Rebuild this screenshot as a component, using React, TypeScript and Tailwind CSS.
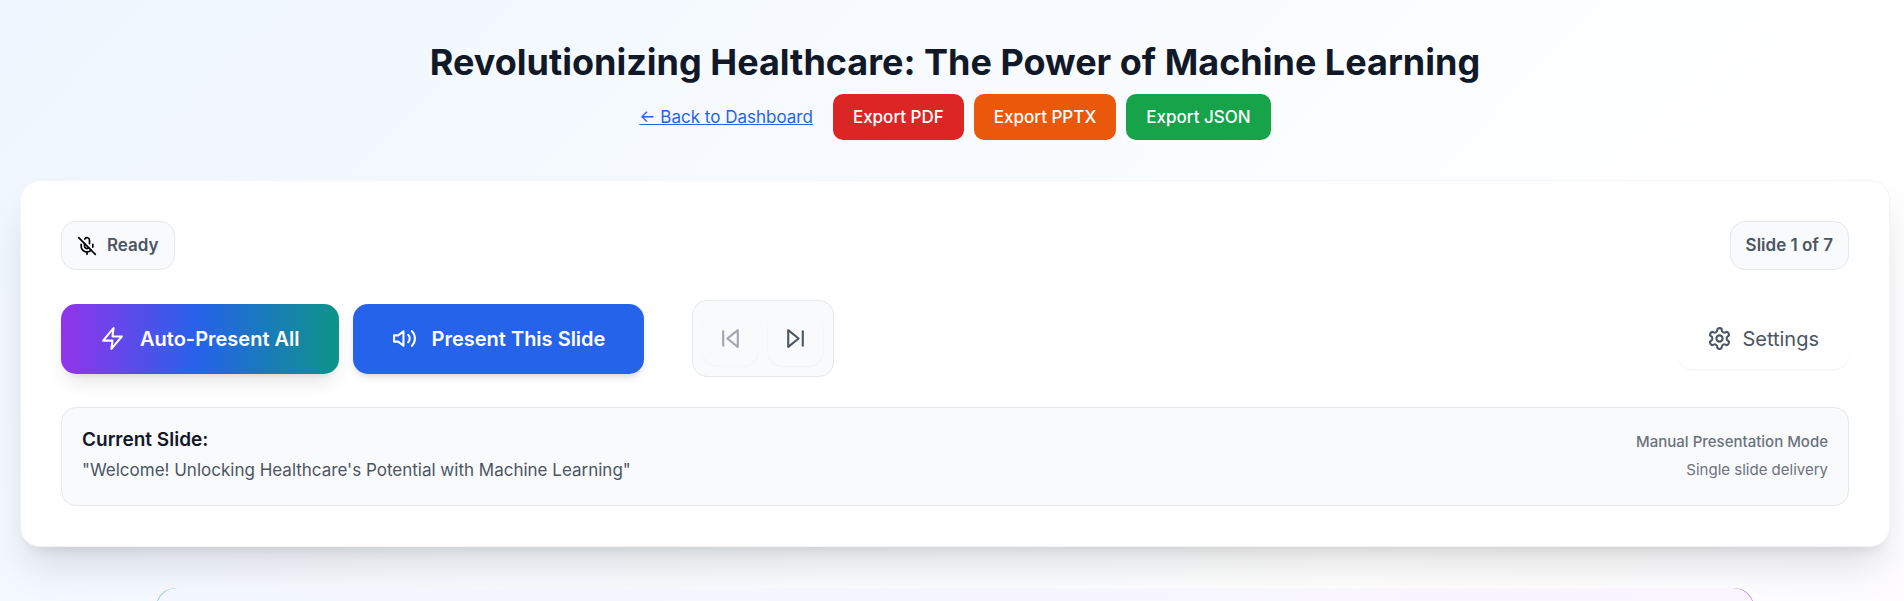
import type { ReactNode } from 'react'

const EXPORTS = [
  { label: 'Export PDF', className: 'bg-[#dc2626]' },
  { label: 'Export PPTX', className: 'bg-[#ea580c]' },
  { label: 'Export JSON', className: 'bg-[#16a34a]' },
]

function Icon({ size = 25, className = '', children }: { size?: number; className?: string; children: ReactNode }) {
  return (
    <svg
      width={size}
      height={size}
      viewBox="0 0 24 24"
      fill="none"
      stroke="currentColor"
      strokeWidth="2"
      strokeLinecap="round"
      strokeLinejoin="round"
      aria-hidden="true"
      className={className}
    >
      {children}
    </svg>
  )
}

function MicOffIcon() {
  return (
    <Icon size={20} className="text-black">
      <line x1="2" x2="22" y1="2" y2="22" />
      <path d="M18.89 13.23A7.12 7.12 0 0 0 19 12v-2" />
      <path d="M5 10v2a7 7 0 0 0 12 5" />
      <path d="M15 9.34V5a3 3 0 0 0-5.68-1.33" />
      <path d="M9 9v3a3 3 0 0 0 5.12 2.12" />
      <line x1="12" x2="12" y1="19" y2="22" />
    </Icon>
  )
}

function ZapIcon() {
  return (
    <Icon>
      <polygon points="13 2 3 14 12 14 11 22 21 10 12 10 13 2" />
    </Icon>
  )
}

function VolumeIcon() {
  return (
    <Icon>
      <polygon points="11 5 6 9 2 9 2 15 6 15 11 19 11 5" />
      <path d="M15.54 8.46a5 5 0 0 1 0 7.07" />
      <path d="M19.07 4.93a10 10 0 0 1 0 14.14" />
    </Icon>
  )
}

function SkipBackIcon() {
  return (
    <Icon>
      <polygon points="19 20 9 12 19 4 19 20" />
      <line x1="5" x2="5" y1="19" y2="5" />
    </Icon>
  )
}

function SkipForwardIcon() {
  return (
    <Icon>
      <polygon points="5 4 15 12 5 20 5 4" />
      <line x1="19" x2="19" y1="5" y2="19" />
    </Icon>
  )
}

function SettingsIcon() {
  return (
    <Icon>
      <path d="M12.22 2h-.44a2 2 0 0 0-2 2v.18a2 2 0 0 1-1 1.73l-.43.25a2 2 0 0 1-2 0l-.15-.08a2 2 0 0 0-2.73.73l-.22.38a2 2 0 0 0 .73 2.73l.15.1a2 2 0 0 1 1 1.72v.51a2 2 0 0 1-1 1.74l-.15.09a2 2 0 0 0-.73 2.73l.22.38a2 2 0 0 0 2.73.73l.15-.08a2 2 0 0 1 2 0l.43.25a2 2 0 0 1 1 1.73V20a2 2 0 0 0 2 2h.44a2 2 0 0 0 2-2v-.18a2 2 0 0 1 1-1.73l.43-.25a2 2 0 0 1 2 0l.15.08a2 2 0 0 0 2.73-.73l.22-.39a2 2 0 0 0-.73-2.73l-.15-.08a2 2 0 0 1-1-1.74v-.5a2 2 0 0 1 1-1.74l.15-.09a2 2 0 0 0 .73-2.73l-.22-.38a2 2 0 0 0-2.73-.73l-.15.08a2 2 0 0 1-2 0l-.43-.25a2 2 0 0 1-1-1.73V4a2 2 0 0 0-2-2z" />
      <circle cx="12" cy="12" r="3" />
    </Icon>
  )
}

function PageHeader() {
  return (
    <header className="flex flex-col items-center gap-[6px]">
      <h1 className="text-[36px] leading-[52px] font-bold text-[#111827]">
        Revolutionizing Healthcare: The Power of Machine Learning
      </h1>
      <div className="flex items-center gap-5">
        <a href="#dashboard" className="text-[17px] leading-[26px] text-[#2563eb] underline">
          ← Back to Dashboard
        </a>
        <div className="flex gap-[10px]">
          {EXPORTS.map((item) => (
            <button
              key={item.label}
              className={`rounded-[10px] px-5 py-[10px] text-[17px] leading-[26px] font-medium text-white ${item.className}`}
            >
              {item.label}
            </button>
          ))}
        </div>
      </div>
    </header>
  )
}

function Badge({ children }: { children: ReactNode }) {
  return (
    <div className="flex items-center gap-[10px] rounded-[15px] border border-[#e5e7eb] bg-[#f9fafb] px-[15px] py-[10px] text-[17px] leading-[27px] font-semibold text-[#4b5563]">
      {children}
    </div>
  )
}

function StatusRow() {
  return (
    <div className="flex items-center justify-between">
      <Badge>
        <MicOffIcon />
        <span>Ready</span>
      </Badge>
      <Badge>Slide 1 of 7</Badge>
    </div>
  )
}

function Controls() {
  return (
    <div className="flex items-center justify-between">
      <div className="flex items-center">
        <button className="flex h-[70px] items-center gap-[15px] rounded-[15px] bg-linear-to-r/srgb from-[#9333ea] via-[#2563eb] to-[#0d9488] px-[39px] text-[20px] font-semibold text-white shadow-[0_12px_19px_-4px_rgba(0,0,0,0.1),0_5px_7px_-5px_rgba(0,0,0,0.1)]">
          <ZapIcon />
          Auto-Present All
        </button>
        <button className="ml-[14px] flex h-[70px] items-center gap-[15px] rounded-[15px] bg-[#2563eb] px-[39px] text-[20px] font-semibold text-white shadow-[0_5px_7px_-1px_rgba(0,0,0,0.1),0_2px_5px_-2px_rgba(0,0,0,0.1)]">
          <VolumeIcon />
          Present This Slide
        </button>
        <div className="ml-12 flex gap-[10px] rounded-[15px] border border-[#e5e7eb] bg-[#f9fafb] p-[10px] text-[#4b5563]">
          <button disabled aria-label="Previous slide" className="rounded-[15px] p-[15px] opacity-50 shadow-xs">
            <SkipBackIcon />
          </button>
          <button aria-label="Next slide" className="rounded-[15px] p-[15px] shadow-xs">
            <SkipForwardIcon />
          </button>
        </div>
      </div>
      <button className="flex h-[60px] items-center gap-[10px] rounded-[15px] px-[30px] text-[20px] text-[#4b5563] shadow-xs">
        <SettingsIcon />
        Settings
      </button>
    </div>
  )
}

function CurrentSlide() {
  return (
    <section className="flex items-start justify-between rounded-[15px] border border-[#e5e7eb] bg-[#f9fafb] px-5 pt-[17px] pb-5">
      <div>
        <h2 className="text-[19px] leading-[30px] font-semibold text-[#111827]">Current Slide:</h2>
        <p className="text-[17px] leading-[30px] text-[#4b5563]">
          "Welcome! Unlocking Healthcare's Potential with Machine Learning"
        </p>
      </div>
      <div className="pt-[3px] text-right text-[15px] leading-7 text-[#6b7280]">
        <p className="font-medium">Manual Presentation Mode</p>
        <p>Single slide delivery</p>
      </div>
    </section>
  )
}

export default function App() {
  return (
    <div className="h-screen overflow-hidden">
      <div className="min-h-[2000px] bg-linear-to-br/srgb from-[#eff6ff] via-white to-[#faf5ff] pt-9 pr-[14px] pl-5 font-['Inter',sans-serif]">
        <PageHeader />
        <main className="mt-10 flex flex-col gap-[30px] rounded-[20px] border border-[#f3f4f6] bg-white p-10 shadow-[0_25px_40px_-8px_rgba(0,0,0,0.13),0_10px_12px_-7px_rgba(0,0,0,0.08)]">
          <StatusRow />
          <Controls />
          <CurrentSlide />
        </main>
        {/* Slide stage, the accent only shows around its corners */}
        <div className="relative mx-auto mt-[41px] max-w-[1598px] rounded-[20px] bg-linear-to-r/srgb from-[#60a5fa] to-[#a855f7]">
          <div className="h-[900px] rounded-[21px] bg-linear-to-r/srgb from-[#f3f7ff] to-[#faf5ff]" />
        </div>
      </div>
    </div>
  )
}
